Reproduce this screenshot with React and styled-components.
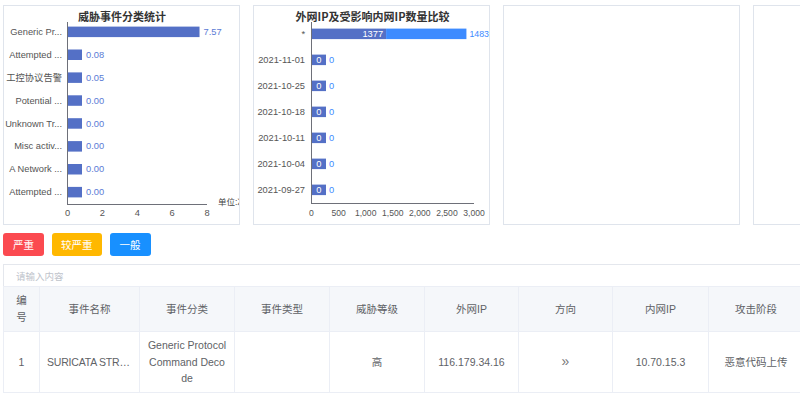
import React from 'react'
import styled, { createGlobalStyle } from 'styled-components'

const GlobalStyle = createGlobalStyle`
    html, body {
        margin: 0;
        padding: 0;
        overflow: hidden;
        background: #fff;
    }
    body {
        font-family: "Liberation Sans", "Noto Sans CJK SC", sans-serif;
    }
`;

const Page = styled.div`
    width: 800px;
    height: 396px;
    overflow: hidden;
    padding: 5px 0 0 3px;
    box-sizing: border-box;
`;

const PanelRow = styled.div`
    display: flex;
    gap: 13px;
    width: 1100px;
`;

const Panel = styled.div`
    flex: none;
    width: 237px;
    height: 220px;
    box-sizing: border-box;
    border: 1px solid #dfe4ec;
    overflow: hidden;

    & svg {
        display: block;
        font-family: "Liberation Sans", "Noto Sans CJK SC", sans-serif;
    }
`;

const ButtonRow = styled.div`
    display: flex;
    gap: 8px;
    margin-top: 8px;
`;

const LevelButton = styled.button`
    height: 23px;
    min-width: 41px;
    padding: 0 9px;
    border: none;
    border-radius: 3px;
    background: ${p => p.color};
    color: #fff;
    font-size: 10.5px;
    font-family: "Noto Sans CJK SC", sans-serif;
    line-height: 23px;
`;

const SearchInput = styled.input`
    display: block;
    width: 1000px;
    height: 23px;
    margin-top: 8px;
    box-sizing: border-box;
    border: 1px solid #e4e7ed;
    border-right: none;
    padding: 0 12px;
    font-size: 9.5px;
    font-family: "Noto Sans CJK SC", sans-serif;
    outline: none;

    &::placeholder {
        color: #c0c4cc;
    }
`;

const Table = styled.table`
    table-layout: fixed;
    border-collapse: collapse;
    width: 800px;
    font-size: 10.5px;
    color: #606266;
    margin-top: -1px;

    & th, & td {
        border: 1px solid #ebeef5;
        text-align: center;
        line-height: 16.6px;
        font-weight: normal;
        box-sizing: border-box;
    }

    & th {
        background: #f5f7fa;
        padding: 5px 8px;
        height: 45px;
    }

    & td {
        padding: 5px 7px;
        height: 60px;
        word-break: break-all;
    }
`;

const Ellipsis = styled.div`
    white-space: nowrap;
    overflow: hidden;
    text-overflow: ellipsis;
    letter-spacing: -0.2px;
`;

const Direction = styled.span`
    font-size: 14px;
    font-weight: 300;
    color: #777;
`;

const categories = [
    ['Generic Pr...', 7.57],
    ['Attempted ...', 0.08],
    ['工控协议告警', 0.05],
    ['Potential ...', 0],
    ['Unknown Tr...', 0],
    ['Misc activ...', 0],
    ['A Network ...', 0],
    ['Attempted ...', 0],
]

const compareRows = [
    ['*', 1377, 1483],
    ['2021-11-01', 0, 0],
    ['2021-10-25', 0, 0],
    ['2021-10-18', 0, 0],
    ['2021-10-11', 0, 0],
    ['2021-10-04', 0, 0],
    ['2021-09-27', 0, 0],
]

const axisColor = '#6e7079'
const labelColor = '#555'
const barColor = '#5470c6'
const lightBar = '#3d8bff'

function CategoryChart() {
    const x0 = 67.5
    const unit = 17.44
    return (
        <svg width="235" height="218" viewBox="4 6 235 218">
            <text x="122" y="21" textAnchor="middle" fontSize="11" fontWeight="bold" fill="#333" fontFamily="Noto Sans CJK SC">威胁事件分类统计</text>
            {categories.map(([name, val], i) => {
                const y = 31.6 + i * 22.9
                const w = Math.max(val * unit, 14.5)
                return (
                    <g key={i}>
                        <text x="62" y={y + 3.3} textAnchor="end" fontSize="9.3" fill={labelColor}>{name}</text>
                        <rect x={x0} y={y - 5} width={w} height="10.5" fill={barColor} />
                        <text x={x0 + w + 4} y={y + 3.3} fontSize="9.3" fill="#5b7bd5">{val.toFixed(2)}</text>
                    </g>
                )
            })}
            <line x1={x0} y1="22" x2={x0} y2="205" stroke={axisColor} strokeWidth="1" />
            <line x1={x0} y1="204.5" x2="207" y2="204.5" stroke={axisColor} strokeWidth="1" />
            {[0, 2, 4, 6, 8].map(t => (
                <text key={t} x={x0 + t * unit} y="216" textAnchor="middle" fontSize="9.3" fill={labelColor}>{t}</text>
            ))}
            <text x="218" y="205" fontSize="8.5" fill="#444">单位:次</text>
        </svg>
    )
}

function CompareChart() {
    const x0 = 311.5
    const unit = 162.5 / 3000
    return (
        <svg width="235" height="218" viewBox="254 6 235 218">
            <text x="372.5" y="21" textAnchor="middle" fontSize="11" fontWeight="bold" fill="#333" fontFamily="Noto Sans CJK SC">外网IP及受影响内网IP数量比较</text>
            {compareRows.map(([name, a, b], i) => {
                const y = 33.8 + i * 26
                const wa = Math.max(a * unit, 14.5)
                const wb = b * unit
                return (
                    <g key={i}>
                        <text x="305" y={y + 3.3} textAnchor="end" fontSize="9.3" fill={labelColor}>{name}</text>
                        <rect x={x0} y={y - 5.2} width={wa} height="10.5" fill={barColor} />
                        {wb > 0 && <rect x={x0 + wa} y={y - 5.2} width={wb} height="10.5" fill={lightBar} />}
                        <text x={a > 0 ? x0 + wa - 3 : x0 + wa / 2} y={y + 3.3} textAnchor={a > 0 ? 'end' : 'middle'} fontSize="9.3" fill="#fff">{a}</text>
                        <text x={x0 + wa + wb + 3} y={y + 3.3} fontSize={b > 0 ? 8.8 : 9.3} fill={lightBar}>{b}</text>
                    </g>
                )
            })}
            <line x1={x0} y1="22" x2={x0} y2="204" stroke={axisColor} strokeWidth="1" />
            <line x1={x0} y1="203.5" x2="474" y2="203.5" stroke={axisColor} strokeWidth="1" />
            {[0, 500, 1000, 1500, 2000, 2500, 3000].map(t => (
                <text key={t} x={x0 + t * unit} y="216" textAnchor="middle" fontSize="8.6" fill={labelColor}>{t.toLocaleString('en-US')}</text>
            ))}
        </svg>
    )
}

const columns = [
    ['编号', 36],
    ['事件名称', 100],
    ['事件分类', 95],
    ['事件类型', 95],
    ['威胁等级', 95],
    ['外网IP', 94],
    ['方向', 94],
    ['内网IP', 96],
    ['攻击阶段', 95],
]

export default function App() {
    return (
        <Page>
            <GlobalStyle />
            <PanelRow>
                <Panel><CategoryChart /></Panel>
                <Panel><CompareChart /></Panel>
                <Panel />
                <Panel />
            </PanelRow>
            <ButtonRow>
                <LevelButton color="#fb4a50">严重</LevelButton>
                <LevelButton color="#ffb800">较严重</LevelButton>
                <LevelButton color="#1890ff">一般</LevelButton>
            </ButtonRow>
            <SearchInput placeholder="请输入内容" />
            <Table>
                <colgroup>
                    {columns.map(([name, w]) => <col key={name} style={{ width: w }} />)}
                </colgroup>
                <thead>
                    <tr>
                        {columns.map(([name]) => <th key={name}>{name}</th>)}
                    </tr>
                </thead>
                <tbody>
                    <tr>
                        <td>1</td>
                        <td><Ellipsis>SURICATA STREAM 3way handshake</Ellipsis></td>
                        <td>Generic Protocol Command Decode</td>
                        <td></td>
                        <td>高</td>
                        <td>116.179.34.16</td>
                        <td><Direction>»</Direction></td>
                        <td>10.70.15.3</td>
                        <td>恶意代码上传</td>
                    </tr>
                </tbody>
            </Table>
        </Page>
    )
}
